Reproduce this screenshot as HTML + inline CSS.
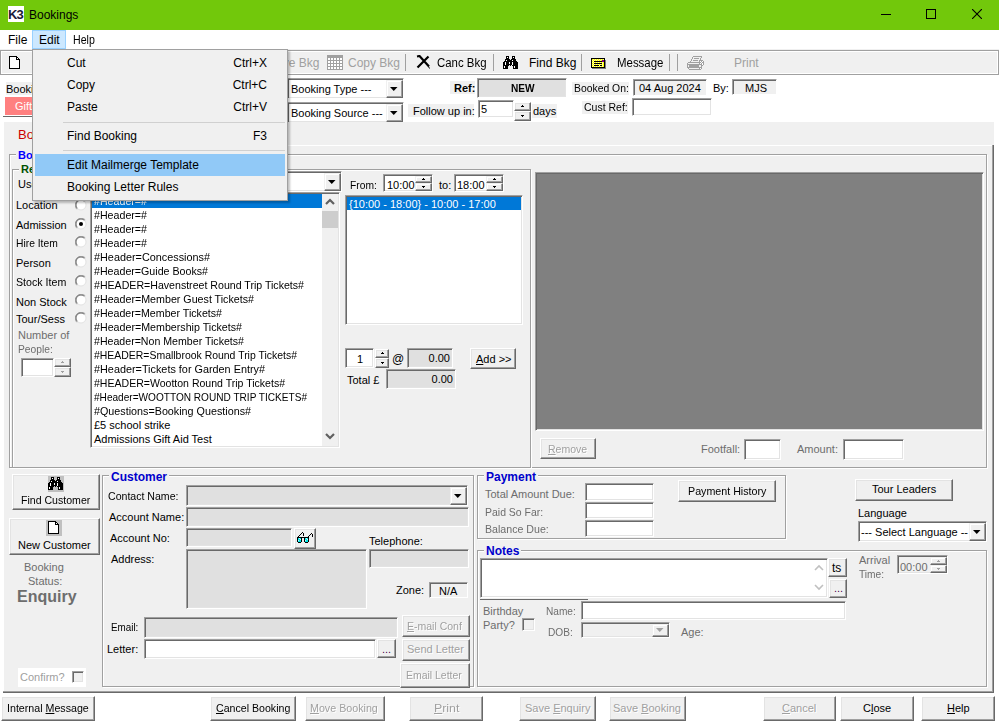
<!DOCTYPE html>
<html><head><meta charset="utf-8">
<style>
*{box-sizing:border-box;margin:0;padding:0}
html,body{width:999px;height:723px;overflow:hidden;background:#fff;position:relative;font-family:"Liberation Sans",sans-serif;font-size:11px;color:#000}
div,span,svg{position:absolute}
.t{white-space:nowrap;line-height:1}
.sk{border:1px solid;border-color:#a0a0a0 #fff #fff #a0a0a0;box-shadow:inset 1px 1px #696969,inset -1px -1px #e3e3e3}
.sk1{border:1px solid;border-color:#a0a0a0 #fff #fff #a0a0a0}
.bt{border:1px solid;border-color:#fff #696969 #696969 #fff;box-shadow:inset -1px -1px #a0a0a0,inset 1px 1px #e3e3e3;background:#f0f0f0}
.cb{border:1px solid;border-color:#f0f0f0 #696969 #696969 #f0f0f0;box-shadow:inset -1px -1px #a0a0a0,inset 1px 1px #fff;background:#f0f0f0}
.grp{border:1px solid #a0a0a0;box-shadow:inset 1px 1px #fff,1px 1px #fff}
.dis{color:#a0a0a0;text-shadow:1px 1px #fff}
.u{text-decoration:underline}
</style></head><body>

<div style="left:0px;top:0px;width:999px;height:30px;background:#72c80b;"></div>
<div style="left:8px;top:6px;width:16px;height:16px;background:#fff;"></div>
<div class="t " style="left:8px;top:8px;font-size:13px;color:#1a1a3a;font-weight:700;letter-spacing:-1px">K3</div>
<div class="t " style="left:29px;top:9px;font-size:12px;color:#000;">Bookings</div>
<div style="left:881px;top:14px;width:10px;height:1px;background:#000;"></div>
<div style="left:926px;top:9px;width:10px;height:10px;border:1px solid #000"></div>
<svg style="left:972px;top:9px" width="10" height="10"><path d="M0 0L10 10M10 0L0 10" stroke="#000" stroke-width="1.1"/></svg>
<div style="left:32px;top:30px;width:34px;height:19px;background:#cce8ff;border:1px solid #99d1ff"></div>
<div class="t " style="left:8px;top:34px;font-size:12px;">File</div>
<div class="t " style="left:39px;top:34px;font-size:12px;">Edit</div>
<div class="t " style="left:73px;top:34px;font-size:12px;transform:scaleX(0.8830);transform-origin:0 0;">Help</div>
<div style="left:0px;top:49px;width:999px;height:1px;background:#f0f0f0;"></div>
<div style="left:0px;top:50px;width:999px;height:25px;background:#f0f0f0;border:1px solid #a0a0a0;box-shadow:inset 1px 1px #fff,inset -1px -1px #fff"></div>
<svg style="left:9px;top:56px" width="11" height="13" shape-rendering="crispEdges"><rect x="0" y="0" width="8" height="1" fill="#000"/><rect x="0" y="1" width="1" height="1" fill="#000"/><rect x="1" y="1" width="6" height="1" fill="#fff"/><rect x="7" y="1" width="2" height="1" fill="#000"/><rect x="0" y="2" width="1" height="1" fill="#000"/><rect x="1" y="2" width="6" height="1" fill="#fff"/><rect x="7" y="2" width="1" height="1" fill="#000"/><rect x="8" y="2" width="1" height="1" fill="#fff"/><rect x="9" y="2" width="1" height="1" fill="#000"/><rect x="0" y="3" width="1" height="1" fill="#000"/><rect x="1" y="3" width="6" height="1" fill="#fff"/><rect x="7" y="3" width="4" height="1" fill="#000"/><rect x="0" y="4" width="1" height="1" fill="#000"/><rect x="1" y="4" width="9" height="1" fill="#fff"/><rect x="10" y="4" width="1" height="1" fill="#000"/><rect x="0" y="5" width="1" height="1" fill="#000"/><rect x="1" y="5" width="9" height="1" fill="#fff"/><rect x="10" y="5" width="1" height="1" fill="#000"/><rect x="0" y="6" width="1" height="1" fill="#000"/><rect x="1" y="6" width="9" height="1" fill="#fff"/><rect x="10" y="6" width="1" height="1" fill="#000"/><rect x="0" y="7" width="1" height="1" fill="#000"/><rect x="1" y="7" width="9" height="1" fill="#fff"/><rect x="10" y="7" width="1" height="1" fill="#000"/><rect x="0" y="8" width="1" height="1" fill="#000"/><rect x="1" y="8" width="9" height="1" fill="#fff"/><rect x="10" y="8" width="1" height="1" fill="#000"/><rect x="0" y="9" width="1" height="1" fill="#000"/><rect x="1" y="9" width="9" height="1" fill="#fff"/><rect x="10" y="9" width="1" height="1" fill="#000"/><rect x="0" y="10" width="1" height="1" fill="#000"/><rect x="1" y="10" width="9" height="1" fill="#fff"/><rect x="10" y="10" width="1" height="1" fill="#000"/><rect x="0" y="11" width="1" height="1" fill="#000"/><rect x="1" y="11" width="9" height="1" fill="#fff"/><rect x="10" y="11" width="1" height="1" fill="#000"/><rect x="0" y="12" width="11" height="1" fill="#000"/></svg>
<div class="t " style="left:268px;top:57px;font-size:12px;color:#a0a0a0;">Save Bkg</div>
<svg style="left:327px;top:55px" width="16" height="15" shape-rendering="crispEdges"><rect x="0" y="0" width="16" height="1" fill="#a0a0a0"/><rect x="0" y="1" width="16" height="1" fill="#a0a0a0"/><rect x="0" y="2" width="16" height="1" fill="#a0a0a0"/><rect x="0" y="3" width="1" height="1" fill="#a0a0a0"/><rect x="1" y="3" width="2" height="1" fill="#fff"/><rect x="3" y="3" width="1" height="1" fill="#a0a0a0"/><rect x="4" y="3" width="2" height="1" fill="#fff"/><rect x="6" y="3" width="1" height="1" fill="#a0a0a0"/><rect x="7" y="3" width="2" height="1" fill="#fff"/><rect x="9" y="3" width="1" height="1" fill="#a0a0a0"/><rect x="10" y="3" width="2" height="1" fill="#fff"/><rect x="12" y="3" width="1" height="1" fill="#a0a0a0"/><rect x="13" y="3" width="2" height="1" fill="#fff"/><rect x="15" y="3" width="1" height="1" fill="#a0a0a0"/><rect x="0" y="4" width="1" height="1" fill="#a0a0a0"/><rect x="1" y="4" width="2" height="1" fill="#fff"/><rect x="3" y="4" width="1" height="1" fill="#a0a0a0"/><rect x="4" y="4" width="2" height="1" fill="#fff"/><rect x="6" y="4" width="1" height="1" fill="#a0a0a0"/><rect x="7" y="4" width="2" height="1" fill="#fff"/><rect x="9" y="4" width="1" height="1" fill="#a0a0a0"/><rect x="10" y="4" width="2" height="1" fill="#fff"/><rect x="12" y="4" width="1" height="1" fill="#a0a0a0"/><rect x="13" y="4" width="2" height="1" fill="#fff"/><rect x="15" y="4" width="1" height="1" fill="#a0a0a0"/><rect x="0" y="5" width="16" height="1" fill="#a0a0a0"/><rect x="0" y="6" width="1" height="1" fill="#a0a0a0"/><rect x="1" y="6" width="2" height="1" fill="#fff"/><rect x="3" y="6" width="1" height="1" fill="#a0a0a0"/><rect x="4" y="6" width="2" height="1" fill="#fff"/><rect x="6" y="6" width="1" height="1" fill="#a0a0a0"/><rect x="7" y="6" width="2" height="1" fill="#fff"/><rect x="9" y="6" width="1" height="1" fill="#a0a0a0"/><rect x="10" y="6" width="2" height="1" fill="#fff"/><rect x="12" y="6" width="1" height="1" fill="#a0a0a0"/><rect x="13" y="6" width="2" height="1" fill="#fff"/><rect x="15" y="6" width="1" height="1" fill="#a0a0a0"/><rect x="0" y="7" width="1" height="1" fill="#a0a0a0"/><rect x="1" y="7" width="2" height="1" fill="#fff"/><rect x="3" y="7" width="1" height="1" fill="#a0a0a0"/><rect x="4" y="7" width="2" height="1" fill="#fff"/><rect x="6" y="7" width="1" height="1" fill="#a0a0a0"/><rect x="7" y="7" width="2" height="1" fill="#fff"/><rect x="9" y="7" width="1" height="1" fill="#a0a0a0"/><rect x="10" y="7" width="2" height="1" fill="#fff"/><rect x="12" y="7" width="1" height="1" fill="#a0a0a0"/><rect x="13" y="7" width="2" height="1" fill="#fff"/><rect x="15" y="7" width="1" height="1" fill="#a0a0a0"/><rect x="0" y="8" width="16" height="1" fill="#a0a0a0"/><rect x="0" y="9" width="1" height="1" fill="#a0a0a0"/><rect x="1" y="9" width="2" height="1" fill="#fff"/><rect x="3" y="9" width="1" height="1" fill="#a0a0a0"/><rect x="4" y="9" width="2" height="1" fill="#fff"/><rect x="6" y="9" width="1" height="1" fill="#a0a0a0"/><rect x="7" y="9" width="2" height="1" fill="#fff"/><rect x="9" y="9" width="1" height="1" fill="#a0a0a0"/><rect x="10" y="9" width="2" height="1" fill="#fff"/><rect x="12" y="9" width="1" height="1" fill="#a0a0a0"/><rect x="13" y="9" width="2" height="1" fill="#fff"/><rect x="15" y="9" width="1" height="1" fill="#a0a0a0"/><rect x="0" y="10" width="1" height="1" fill="#a0a0a0"/><rect x="1" y="10" width="2" height="1" fill="#fff"/><rect x="3" y="10" width="1" height="1" fill="#a0a0a0"/><rect x="4" y="10" width="2" height="1" fill="#fff"/><rect x="6" y="10" width="1" height="1" fill="#a0a0a0"/><rect x="7" y="10" width="2" height="1" fill="#fff"/><rect x="9" y="10" width="1" height="1" fill="#a0a0a0"/><rect x="10" y="10" width="2" height="1" fill="#fff"/><rect x="12" y="10" width="1" height="1" fill="#a0a0a0"/><rect x="13" y="10" width="2" height="1" fill="#fff"/><rect x="15" y="10" width="1" height="1" fill="#a0a0a0"/><rect x="0" y="11" width="16" height="1" fill="#a0a0a0"/><rect x="0" y="12" width="1" height="1" fill="#a0a0a0"/><rect x="1" y="12" width="2" height="1" fill="#fff"/><rect x="3" y="12" width="1" height="1" fill="#a0a0a0"/><rect x="4" y="12" width="2" height="1" fill="#fff"/><rect x="6" y="12" width="1" height="1" fill="#a0a0a0"/><rect x="7" y="12" width="2" height="1" fill="#fff"/><rect x="9" y="12" width="1" height="1" fill="#a0a0a0"/><rect x="10" y="12" width="2" height="1" fill="#fff"/><rect x="12" y="12" width="1" height="1" fill="#a0a0a0"/><rect x="13" y="12" width="2" height="1" fill="#fff"/><rect x="15" y="12" width="1" height="1" fill="#a0a0a0"/><rect x="0" y="13" width="1" height="1" fill="#a0a0a0"/><rect x="1" y="13" width="2" height="1" fill="#fff"/><rect x="3" y="13" width="1" height="1" fill="#a0a0a0"/><rect x="4" y="13" width="2" height="1" fill="#fff"/><rect x="6" y="13" width="1" height="1" fill="#a0a0a0"/><rect x="7" y="13" width="2" height="1" fill="#fff"/><rect x="9" y="13" width="1" height="1" fill="#a0a0a0"/><rect x="10" y="13" width="2" height="1" fill="#fff"/><rect x="12" y="13" width="1" height="1" fill="#a0a0a0"/><rect x="13" y="13" width="2" height="1" fill="#fff"/><rect x="15" y="13" width="1" height="1" fill="#a0a0a0"/><rect x="0" y="14" width="16" height="1" fill="#a0a0a0"/></svg>
<div class="t " style="left:348px;top:57px;font-size:12px;color:#a0a0a0;">Copy Bkg</div>
<div style="left:405px;top:54px;width:1px;height:17px;background:#a0a0a0;"></div>
<svg style="left:416px;top:55px" width="15" height="15"><path d="M1 1.5L3.5 1L13 11.5M12.5 1.5L1.5 12.5" stroke="#000" stroke-width="2.2" fill="none"/><path d="M12.5 11.5L13.5 13.5" stroke="#000" stroke-width="1"/></svg>
<div class="t " style="left:437px;top:57px;font-size:12px;transform:scaleX(0.9514);transform-origin:0 0;">Canc Bkg</div>
<div style="left:493px;top:54px;width:1px;height:17px;background:#a0a0a0;"></div>
<svg style="left:503px;top:56px" width="15" height="13" shape-rendering="crispEdges"><rect x="3" y="0" width="3" height="1" fill="#000"/><rect x="9" y="0" width="3" height="1" fill="#000"/><rect x="3" y="1" width="1" height="1" fill="#000"/><rect x="4" y="1" width="1" height="1" fill="#fff"/><rect x="5" y="1" width="1" height="1" fill="#000"/><rect x="9" y="1" width="1" height="1" fill="#000"/><rect x="10" y="1" width="1" height="1" fill="#fff"/><rect x="11" y="1" width="1" height="1" fill="#000"/><rect x="3" y="2" width="3" height="1" fill="#000"/><rect x="9" y="2" width="3" height="1" fill="#000"/><rect x="2" y="3" width="5" height="1" fill="#000"/><rect x="8" y="3" width="5" height="1" fill="#000"/><rect x="2" y="4" width="1" height="1" fill="#000"/><rect x="3" y="4" width="1" height="1" fill="#fff"/><rect x="4" y="4" width="5" height="1" fill="#000"/><rect x="9" y="4" width="1" height="1" fill="#fff"/><rect x="10" y="4" width="3" height="1" fill="#000"/><rect x="1" y="5" width="13" height="1" fill="#000"/><rect x="0" y="6" width="2" height="1" fill="#000"/><rect x="2" y="6" width="1" height="1" fill="#fff"/><rect x="3" y="6" width="3" height="1" fill="#000"/><rect x="6" y="6" width="1" height="1" fill="#fff"/><rect x="7" y="6" width="2" height="1" fill="#000"/><rect x="9" y="6" width="1" height="1" fill="#fff"/><rect x="10" y="6" width="5" height="1" fill="#000"/><rect x="0" y="7" width="2" height="1" fill="#000"/><rect x="2" y="7" width="1" height="1" fill="#fff"/><rect x="3" y="7" width="3" height="1" fill="#000"/><rect x="6" y="7" width="1" height="1" fill="#fff"/><rect x="7" y="7" width="2" height="1" fill="#000"/><rect x="9" y="7" width="1" height="1" fill="#fff"/><rect x="10" y="7" width="5" height="1" fill="#000"/><rect x="0" y="8" width="2" height="1" fill="#000"/><rect x="2" y="8" width="1" height="1" fill="#fff"/><rect x="3" y="8" width="6" height="1" fill="#000"/><rect x="9" y="8" width="1" height="1" fill="#fff"/><rect x="10" y="8" width="5" height="1" fill="#000"/><rect x="0" y="9" width="6" height="1" fill="#000"/><rect x="7" y="9" width="1" height="1" fill="#000"/><rect x="9" y="9" width="6" height="1" fill="#000"/><rect x="0" y="10" width="1" height="1" fill="#000"/><rect x="1" y="10" width="1" height="1" fill="#fff"/><rect x="2" y="10" width="3" height="1" fill="#000"/><rect x="10" y="10" width="1" height="1" fill="#000"/><rect x="11" y="10" width="1" height="1" fill="#fff"/><rect x="12" y="10" width="3" height="1" fill="#000"/><rect x="0" y="11" width="1" height="1" fill="#000"/><rect x="1" y="11" width="1" height="1" fill="#fff"/><rect x="2" y="11" width="3" height="1" fill="#000"/><rect x="10" y="11" width="1" height="1" fill="#000"/><rect x="11" y="11" width="1" height="1" fill="#fff"/><rect x="12" y="11" width="3" height="1" fill="#000"/><rect x="0" y="12" width="5" height="1" fill="#000"/><rect x="10" y="12" width="5" height="1" fill="#000"/></svg>
<div class="t " style="left:529px;top:57px;font-size:12px;">Find Bkg</div>
<div style="left:581px;top:54px;width:1px;height:17px;background:#a0a0a0;"></div>
<svg style="left:591px;top:58px" width="15" height="11" shape-rendering="crispEdges"><rect x="0" y="0" width="14" height="1" fill="#000"/><rect x="0" y="1" width="1" height="1" fill="#000"/><rect x="1" y="1" width="1" height="1" fill="#ffff00"/><rect x="2" y="1" width="1" height="1" fill="#ffffa0"/><rect x="3" y="1" width="1" height="1" fill="#ffff00"/><rect x="4" y="1" width="1" height="1" fill="#ffffa0"/><rect x="5" y="1" width="1" height="1" fill="#ffff00"/><rect x="6" y="1" width="1" height="1" fill="#ffffa0"/><rect x="7" y="1" width="1" height="1" fill="#ffff00"/><rect x="8" y="1" width="1" height="1" fill="#ffffa0"/><rect x="9" y="1" width="1" height="1" fill="#ffff00"/><rect x="10" y="1" width="1" height="1" fill="#ffffa0"/><rect x="11" y="1" width="1" height="1" fill="#ffff00"/><rect x="12" y="1" width="1" height="1" fill="#ffffa0"/><rect x="13" y="1" width="1" height="1" fill="#000"/><rect x="0" y="2" width="1" height="1" fill="#000"/><rect x="1" y="2" width="1" height="1" fill="#ffffa0"/><rect x="2" y="2" width="1" height="1" fill="#ffff00"/><rect x="3" y="2" width="1" height="1" fill="#ffffa0"/><rect x="4" y="2" width="1" height="1" fill="#ffff00"/><rect x="5" y="2" width="1" height="1" fill="#ffffa0"/><rect x="6" y="2" width="1" height="1" fill="#ffff00"/><rect x="7" y="2" width="1" height="1" fill="#ffffa0"/><rect x="8" y="2" width="1" height="1" fill="#ffff00"/><rect x="9" y="2" width="1" height="1" fill="#ffffa0"/><rect x="10" y="2" width="1" height="1" fill="#ffff00"/><rect x="11" y="2" width="2" height="1" fill="#800080"/><rect x="13" y="2" width="1" height="1" fill="#000"/><rect x="14" y="2" width="1" height="1" fill="#808080"/><rect x="0" y="3" width="1" height="1" fill="#000"/><rect x="1" y="3" width="1" height="1" fill="#ffff00"/><rect x="2" y="3" width="1" height="1" fill="#ffffa0"/><rect x="3" y="3" width="8" height="1" fill="#000"/><rect x="11" y="3" width="2" height="1" fill="#800080"/><rect x="13" y="3" width="1" height="1" fill="#000"/><rect x="14" y="3" width="1" height="1" fill="#808080"/><rect x="0" y="4" width="1" height="1" fill="#000"/><rect x="1" y="4" width="1" height="1" fill="#ffffa0"/><rect x="2" y="4" width="1" height="1" fill="#ffff00"/><rect x="3" y="4" width="1" height="1" fill="#ffffa0"/><rect x="4" y="4" width="1" height="1" fill="#ffff00"/><rect x="5" y="4" width="1" height="1" fill="#ffffa0"/><rect x="6" y="4" width="1" height="1" fill="#ffff00"/><rect x="7" y="4" width="1" height="1" fill="#ffffa0"/><rect x="8" y="4" width="1" height="1" fill="#ffff00"/><rect x="9" y="4" width="1" height="1" fill="#ffffa0"/><rect x="10" y="4" width="1" height="1" fill="#ffff00"/><rect x="11" y="4" width="1" height="1" fill="#ffffa0"/><rect x="12" y="4" width="1" height="1" fill="#ffff00"/><rect x="13" y="4" width="1" height="1" fill="#000"/><rect x="14" y="4" width="1" height="1" fill="#808080"/><rect x="0" y="5" width="1" height="1" fill="#000"/><rect x="1" y="5" width="1" height="1" fill="#ffff00"/><rect x="2" y="5" width="1" height="1" fill="#ffffa0"/><rect x="3" y="5" width="8" height="1" fill="#000"/><rect x="11" y="5" width="1" height="1" fill="#ffffa0"/><rect x="12" y="5" width="1" height="1" fill="#ffff00"/><rect x="13" y="5" width="1" height="1" fill="#000"/><rect x="14" y="5" width="1" height="1" fill="#808080"/><rect x="0" y="6" width="1" height="1" fill="#000"/><rect x="1" y="6" width="1" height="1" fill="#ffffa0"/><rect x="2" y="6" width="1" height="1" fill="#ffff00"/><rect x="3" y="6" width="1" height="1" fill="#ffffa0"/><rect x="4" y="6" width="1" height="1" fill="#ffff00"/><rect x="5" y="6" width="1" height="1" fill="#ffffa0"/><rect x="6" y="6" width="1" height="1" fill="#ffff00"/><rect x="7" y="6" width="1" height="1" fill="#ffffa0"/><rect x="8" y="6" width="1" height="1" fill="#ffff00"/><rect x="9" y="6" width="1" height="1" fill="#ffffa0"/><rect x="10" y="6" width="1" height="1" fill="#ffff00"/><rect x="11" y="6" width="1" height="1" fill="#ffffa0"/><rect x="12" y="6" width="1" height="1" fill="#ffff00"/><rect x="13" y="6" width="1" height="1" fill="#000"/><rect x="14" y="6" width="1" height="1" fill="#808080"/><rect x="0" y="7" width="1" height="1" fill="#000"/><rect x="1" y="7" width="1" height="1" fill="#ffff00"/><rect x="2" y="7" width="1" height="1" fill="#ffffa0"/><rect x="3" y="7" width="5" height="1" fill="#000"/><rect x="8" y="7" width="1" height="1" fill="#ffffa0"/><rect x="9" y="7" width="2" height="1" fill="#000"/><rect x="11" y="7" width="1" height="1" fill="#ffffa0"/><rect x="12" y="7" width="1" height="1" fill="#ffff00"/><rect x="13" y="7" width="1" height="1" fill="#000"/><rect x="14" y="7" width="1" height="1" fill="#808080"/><rect x="0" y="8" width="1" height="1" fill="#000"/><rect x="1" y="8" width="1" height="1" fill="#ffffa0"/><rect x="2" y="8" width="1" height="1" fill="#ffff00"/><rect x="3" y="8" width="1" height="1" fill="#ffffa0"/><rect x="4" y="8" width="1" height="1" fill="#ffff00"/><rect x="5" y="8" width="1" height="1" fill="#ffffa0"/><rect x="6" y="8" width="1" height="1" fill="#ffff00"/><rect x="7" y="8" width="1" height="1" fill="#ffffa0"/><rect x="8" y="8" width="1" height="1" fill="#ffff00"/><rect x="9" y="8" width="1" height="1" fill="#ffffa0"/><rect x="10" y="8" width="1" height="1" fill="#ffff00"/><rect x="11" y="8" width="1" height="1" fill="#ffffa0"/><rect x="12" y="8" width="1" height="1" fill="#ffff00"/><rect x="13" y="8" width="1" height="1" fill="#000"/><rect x="14" y="8" width="1" height="1" fill="#808080"/><rect x="0" y="9" width="14" height="1" fill="#000"/><rect x="14" y="9" width="1" height="1" fill="#808080"/><rect x="1" y="10" width="14" height="1" fill="#808080"/></svg>
<div class="t " style="left:617px;top:57px;font-size:12px;transform:scaleX(0.9527);transform-origin:0 0;">Message</div>
<div style="left:669px;top:54px;width:1px;height:17px;background:#a0a0a0;"></div>
<div style="left:677px;top:54px;width:1px;height:17px;background:#a0a0a0;"></div>
<svg style="left:687px;top:56px" width="17" height="14" shape-rendering="crispEdges"><rect x="6" y="0" width="9" height="1" fill="#a0a0a0"/><rect x="5" y="1" width="1" height="1" fill="#a0a0a0"/><rect x="14" y="1" width="1" height="1" fill="#a0a0a0"/><rect x="5" y="2" width="1" height="1" fill="#a0a0a0"/><rect x="7" y="2" width="5" height="1" fill="#a0a0a0"/><rect x="13" y="2" width="1" height="1" fill="#a0a0a0"/><rect x="4" y="3" width="1" height="1" fill="#a0a0a0"/><rect x="13" y="3" width="1" height="1" fill="#a0a0a0"/><rect x="4" y="4" width="1" height="1" fill="#a0a0a0"/><rect x="6" y="4" width="5" height="1" fill="#a0a0a0"/><rect x="12" y="4" width="4" height="1" fill="#a0a0a0"/><rect x="3" y="5" width="1" height="1" fill="#a0a0a0"/><rect x="12" y="5" width="1" height="1" fill="#a0a0a0"/><rect x="13" y="5" width="1" height="1" fill="#fff"/><rect x="14" y="5" width="1" height="1" fill="#a0a0a0"/><rect x="15" y="5" width="1" height="1" fill="#fff"/><rect x="16" y="5" width="1" height="1" fill="#a0a0a0"/><rect x="1" y="6" width="13" height="1" fill="#a0a0a0"/><rect x="14" y="6" width="1" height="1" fill="#fff"/><rect x="15" y="6" width="2" height="1" fill="#a0a0a0"/><rect x="0" y="7" width="1" height="1" fill="#a0a0a0"/><rect x="12" y="7" width="1" height="1" fill="#a0a0a0"/><rect x="13" y="7" width="1" height="1" fill="#fff"/><rect x="14" y="7" width="1" height="1" fill="#a0a0a0"/><rect x="15" y="7" width="1" height="1" fill="#fff"/><rect x="16" y="7" width="1" height="1" fill="#a0a0a0"/><rect x="0" y="8" width="15" height="1" fill="#a0a0a0"/><rect x="15" y="8" width="1" height="1" fill="#fff"/><rect x="16" y="8" width="1" height="1" fill="#a0a0a0"/><rect x="0" y="9" width="1" height="1" fill="#a0a0a0"/><rect x="2" y="9" width="10" height="1" fill="#a0a0a0"/><rect x="14" y="9" width="2" height="1" fill="#a0a0a0"/><rect x="0" y="10" width="1" height="1" fill="#a0a0a0"/><rect x="2" y="10" width="10" height="1" fill="#a0a0a0"/><rect x="14" y="10" width="1" height="1" fill="#a0a0a0"/><rect x="0" y="11" width="15" height="1" fill="#a0a0a0"/><rect x="1" y="12" width="1" height="1" fill="#a0a0a0"/><rect x="12" y="12" width="1" height="1" fill="#a0a0a0"/><rect x="13" y="12" width="1" height="1" fill="#fff"/><rect x="14" y="12" width="1" height="1" fill="#a0a0a0"/><rect x="2" y="13" width="12" height="1" fill="#a0a0a0"/></svg>
<div class="t " style="left:734px;top:57px;font-size:12px;color:#a0a0a0;">Print</div>
<div style="left:6px;top:82px;width:94px;height:13px;background:#f0f0f0;"></div>
<div class="t " style="left:6px;top:84px;font-size:11px;">Booking</div>
<div style="left:4px;top:96px;width:96px;height:19px;background:#fff;"></div>
<div style="left:5px;top:97px;width:95px;height:18px;background:#ff8080;"></div>
<div class="t " style="left:15px;top:101px;font-size:11px;color:#fff;">Gift Aid</div>
<div style="left:3px;top:116px;width:117px;height:1px;background:#696969;"></div>
<div class="sk" style="left:287px;top:78px;width:117px;height:21px;background:#fff;"></div>
<div class="cb" style="left:386px;top:80px;width:17px;height:18px"></div>
<svg style="left:390px;top:87px" width="8" height="5"><path d="M0 0H7.5L3.75 4Z" fill="#000"/></svg>
<div class="t " style="left:291px;top:84px;font-size:11px;">Booking Type ---</div>
<div class="sk" style="left:287px;top:102px;width:117px;height:21px;background:#fff;"></div>
<div class="cb" style="left:386px;top:104px;width:17px;height:18px"></div>
<svg style="left:390px;top:111px" width="8" height="5"><path d="M0 0H7.5L3.75 4Z" fill="#000"/></svg>
<div class="t " style="left:291px;top:108px;font-size:11px;">Booking Source ---</div>
<div style="left:450px;top:81px;width:25px;height:13px;background:#f0f0f0;"></div>
<div class="t " style="left:454px;top:83px;font-size:11px;font-weight:700;">Ref:</div>
<div class="sk" style="left:477px;top:78px;width:90px;height:20px;background:#e0e0e0;"></div>
<div class="t " style="left:511px;top:83px;font-size:11px;font-weight:700;transform:scaleX(0.9193);transform-origin:0 0;">NEW</div>
<div style="left:408px;top:104px;width:66px;height:13px;background:#f0f0f0;"></div>
<div class="t " style="left:413px;top:106px;font-size:11px;">Follow up in:</div>
<div class="sk" style="left:478px;top:100px;width:36px;height:18px;background:#fff;"></div>
<div class="t " style="left:481px;top:104px;font-size:11px;">5</div>
<div class="bt" style="left:514px;top:102px;width:17px;height:9px;"></div>
<div class="bt" style="left:514px;top:111px;width:17px;height:10px;"></div>
<svg style="left:521px;top:105px" width="3" height="2" shape-rendering="crispEdges"><rect x="1" y="0" width="1" height="1" fill="#000"/><rect x="0" y="1" width="3" height="1" fill="#000"/></svg>
<svg style="left:521px;top:115px" width="3" height="2" shape-rendering="crispEdges"><rect x="0" y="0" width="3" height="1" fill="#000"/><rect x="1" y="1" width="1" height="1" fill="#000"/></svg>
<div style="left:532px;top:104px;width:25px;height:14px;background:#f0f0f0;"></div>
<div class="t " style="left:533px;top:106px;font-size:11px;">days</div>
<div style="left:572px;top:82px;width:57px;height:13px;background:#f0f0f0;"></div>
<div class="t " style="left:574px;top:83px;font-size:11px;transform:scaleX(0.9433);transform-origin:0 0;">Booked On:</div>
<div class="sk1" style="left:633px;top:79px;width:74px;height:17px;background:#f0f0f0;box-shadow:inset 1px 1px #696969"></div>
<div class="t " style="left:639px;top:83px;font-size:11px;">04 Aug 2024</div>
<div class="t " style="left:713px;top:83px;font-size:11px;">By:</div>
<div class="sk1" style="left:732px;top:79px;width:45px;height:16px;background:#f0f0f0;box-shadow:inset 1px 1px #696969"></div>
<div class="t " style="left:745px;top:83px;font-size:11px;">MJS</div>
<div style="left:582px;top:101px;width:46px;height:13px;background:#f0f0f0;"></div>
<div class="t " style="left:584px;top:102px;font-size:11px;transform:scaleX(0.9551);transform-origin:0 0;">Cust Ref:</div>
<div class="sk" style="left:632px;top:98px;width:80px;height:18px;background:#fff;"></div>
<div style="left:4px;top:122px;width:990px;height:570px;background:#f0f0f0;"></div>
<div style="left:3px;top:692px;width:991px;height:1px;background:#696969;"></div>
<div style="left:3px;top:691px;width:991px;height:1px;background:#a0a0a0;"></div>
<div style="left:32px;top:145px;width:960px;height:1px;background:#fff;"></div>
<div style="left:3px;top:122px;width:1px;height:1px;background:#fff;"></div>
<div style="left:992px;top:145px;width:1px;height:547px;background:#a0a0a0;"></div>
<div style="left:993px;top:145px;width:1px;height:547px;background:#696969;"></div>
<div class="t " style="left:18px;top:128px;font-size:13px;color:#cc0000;">Booking</div>
<div class="grp" style="left:9px;top:154px;width:978px;height:314px;"></div>
<div class="t " style="left:16px;top:150px;font-size:11px;color:#0000ff;font-weight:700;background:#f0f0f0;padding:0 2px">Booking</div>
<div class="grp" style="left:12px;top:169px;width:519px;height:299px;"></div>
<div class="t " style="left:19px;top:164px;font-size:11px;color:#005000;font-weight:700;background:#f0f0f0;padding:0 2px">Resource</div>
<div class="t " style="left:18px;top:179px;font-size:11px;">Use</div>
<div class="t " style="left:16px;top:200px;font-size:11px;">Location</div>
<svg style="left:75px;top:199px" width="12" height="12"><circle cx="6" cy="6" r="5" fill="#fff"/><path d="M1.76 10.24A6 6 0 0 1 10.24 1.76" fill="none" stroke="#a0a0a0"/><path d="M2.46 9.54A5 5 0 0 1 9.54 2.46" fill="none" stroke="#696969"/><path d="M9.54 2.46A5 5 0 0 1 2.46 9.54" fill="none" stroke="#e3e3e3"/></svg>
<div class="t " style="left:16px;top:220px;font-size:11px;">Admission</div>
<svg style="left:75px;top:218px" width="12" height="12"><circle cx="6" cy="6" r="5" fill="#fff"/><path d="M1.76 10.24A6 6 0 0 1 10.24 1.76" fill="none" stroke="#a0a0a0"/><path d="M2.46 9.54A5 5 0 0 1 9.54 2.46" fill="none" stroke="#696969"/><path d="M9.54 2.46A5 5 0 0 1 2.46 9.54" fill="none" stroke="#e3e3e3"/><circle cx="6" cy="6" r="2" fill="#000"/></svg>
<div class="t " style="left:16px;top:238px;font-size:11px;transform:scaleX(0.9367);transform-origin:0 0;">Hire Item</div>
<svg style="left:75px;top:236px" width="12" height="12"><circle cx="6" cy="6" r="5" fill="#fff"/><path d="M1.76 10.24A6 6 0 0 1 10.24 1.76" fill="none" stroke="#a0a0a0"/><path d="M2.46 9.54A5 5 0 0 1 9.54 2.46" fill="none" stroke="#696969"/><path d="M9.54 2.46A5 5 0 0 1 2.46 9.54" fill="none" stroke="#e3e3e3"/></svg>
<div class="t " style="left:16px;top:258px;font-size:11px;">Person</div>
<svg style="left:75px;top:256px" width="12" height="12"><circle cx="6" cy="6" r="5" fill="#fff"/><path d="M1.76 10.24A6 6 0 0 1 10.24 1.76" fill="none" stroke="#a0a0a0"/><path d="M2.46 9.54A5 5 0 0 1 9.54 2.46" fill="none" stroke="#696969"/><path d="M9.54 2.46A5 5 0 0 1 2.46 9.54" fill="none" stroke="#e3e3e3"/></svg>
<div class="t " style="left:16px;top:277px;font-size:11px;transform:scaleX(0.9679);transform-origin:0 0;">Stock Item</div>
<svg style="left:75px;top:275px" width="12" height="12"><circle cx="6" cy="6" r="5" fill="#fff"/><path d="M1.76 10.24A6 6 0 0 1 10.24 1.76" fill="none" stroke="#a0a0a0"/><path d="M2.46 9.54A5 5 0 0 1 9.54 2.46" fill="none" stroke="#696969"/><path d="M9.54 2.46A5 5 0 0 1 2.46 9.54" fill="none" stroke="#e3e3e3"/></svg>
<div class="t " style="left:16px;top:297px;font-size:11px;">Non Stock</div>
<svg style="left:75px;top:294px" width="12" height="12"><circle cx="6" cy="6" r="5" fill="#fff"/><path d="M1.76 10.24A6 6 0 0 1 10.24 1.76" fill="none" stroke="#a0a0a0"/><path d="M2.46 9.54A5 5 0 0 1 9.54 2.46" fill="none" stroke="#696969"/><path d="M9.54 2.46A5 5 0 0 1 2.46 9.54" fill="none" stroke="#e3e3e3"/></svg>
<div class="t " style="left:16px;top:314px;font-size:11px;">Tour/Sess</div>
<svg style="left:75px;top:312px" width="12" height="12"><circle cx="6" cy="6" r="5" fill="#fff"/><path d="M1.76 10.24A6 6 0 0 1 10.24 1.76" fill="none" stroke="#a0a0a0"/><path d="M2.46 9.54A5 5 0 0 1 9.54 2.46" fill="none" stroke="#696969"/><path d="M9.54 2.46A5 5 0 0 1 2.46 9.54" fill="none" stroke="#e3e3e3"/></svg>
<div class="t " style="left:18px;top:330px;font-size:11px;color:#6d6d6d;">Number of</div>
<div class="t " style="left:18px;top:344px;font-size:11px;color:#6d6d6d;transform:scaleX(0.9327);transform-origin:0 0;">People:</div>
<div class="sk" style="left:21px;top:358px;width:33px;height:19px;background:#fff;"></div>
<div class="bt" style="left:54px;top:358px;width:17px;height:9px;"></div>
<div class="bt" style="left:54px;top:367px;width:17px;height:10px;"></div>
<svg style="left:61px;top:361px" width="3" height="2" shape-rendering="crispEdges"><rect x="1" y="0" width="1" height="1" fill="#a0a0a0"/><rect x="0" y="1" width="3" height="1" fill="#a0a0a0"/></svg>
<svg style="left:61px;top:371px" width="3" height="2" shape-rendering="crispEdges"><rect x="0" y="0" width="3" height="1" fill="#a0a0a0"/><rect x="1" y="1" width="1" height="1" fill="#a0a0a0"/></svg>
<div class="sk" style="left:90px;top:192px;width:250px;height:256px;background:#fff;"></div>
<div style="left:92px;top:194px;width:230px;height:14px;background:#0078d7;"></div>
<div class="t " style="left:94px;top:196px;font-size:11px;color:#fff;transform:scaleX(0.9680);transform-origin:0 0;">#Header=#</div>
<div class="t " style="left:94px;top:210px;font-size:11px;color:#000;transform:scaleX(0.9680);transform-origin:0 0;">#Header=#</div>
<div class="t " style="left:94px;top:224px;font-size:11px;color:#000;transform:scaleX(0.9680);transform-origin:0 0;">#Header=#</div>
<div class="t " style="left:94px;top:238px;font-size:11px;color:#000;transform:scaleX(0.9680);transform-origin:0 0;">#Header=#</div>
<div class="t " style="left:94px;top:252px;font-size:11px;color:#000;transform:scaleX(0.9854);transform-origin:0 0;">#Header=Concessions#</div>
<div class="t " style="left:94px;top:266px;font-size:11px;color:#000;transform:scaleX(0.9684);transform-origin:0 0;">#Header=Guide Books#</div>
<div class="t " style="left:94px;top:280px;font-size:11px;color:#000;transform:scaleX(0.9634);transform-origin:0 0;">#HEADER=Havenstreet Round Trip Tickets#</div>
<div class="t " style="left:94px;top:294px;font-size:11px;color:#000;transform:scaleX(0.9710);transform-origin:0 0;">#Header=Member Guest Tickets#</div>
<div class="t " style="left:94px;top:308px;font-size:11px;color:#000;transform:scaleX(0.9669);transform-origin:0 0;">#Header=Member Tickets#</div>
<div class="t " style="left:94px;top:322px;font-size:11px;color:#000;transform:scaleX(0.9702);transform-origin:0 0;">#Header=Membership Tickets#</div>
<div class="t " style="left:94px;top:336px;font-size:11px;color:#000;transform:scaleX(0.9640);transform-origin:0 0;">#Header=Non Member Tickets#</div>
<div class="t " style="left:94px;top:350px;font-size:11px;color:#000;transform:scaleX(0.9500);transform-origin:0 0;">#HEADER=Smallbrook Round Trip Tickets#</div>
<div class="t " style="left:94px;top:364px;font-size:11px;color:#000;transform:scaleX(0.9853);transform-origin:0 0;">#Header=Tickets for Garden Entry#</div>
<div class="t " style="left:94px;top:378px;font-size:11px;color:#000;transform:scaleX(0.9578);transform-origin:0 0;">#HEADER=Wootton Round Trip Tickets#</div>
<div class="t " style="left:94px;top:392px;font-size:11px;color:#000;transform:scaleX(0.9166);transform-origin:0 0;">#Header=WOOTTON ROUND TRIP TICKETS#</div>
<div class="t " style="left:94px;top:406px;font-size:11px;color:#000;transform:scaleX(0.9780);transform-origin:0 0;">#Questions=Booking Questions#</div>
<div class="t " style="left:94px;top:420px;font-size:11px;color:#000;">&pound;5 school strike</div>
<div class="t " style="left:94px;top:434px;font-size:11px;color:#000;">Admissions Gift Aid Test</div>
<div style="left:322px;top:194px;width:16px;height:252px;background:#f0f0f0;"></div>
<div style="left:322px;top:211px;width:16px;height:17px;background:#cdcdcd;"></div>
<svg style="left:325px;top:198px" width="10" height="8"><path d="M1 6L5 2L9 6" fill="none" stroke="#606060" stroke-width="2.2"/></svg>
<svg style="left:325px;top:432px" width="10" height="8"><path d="M1 2L5 6L9 2" fill="none" stroke="#606060" stroke-width="2.2"/></svg>
<div class="sk" style="left:90px;top:171px;width:252px;height:21px;background:#fff;"></div>
<div class="cb" style="left:324px;top:173px;width:17px;height:18px"></div>
<svg style="left:328px;top:180px" width="8" height="5"><path d="M0 0H7.5L3.75 4Z" fill="#000"/></svg>
<div class="t " style="left:350px;top:180px;font-size:11px;transform:scaleX(0.9327);transform-origin:0 0;">From:</div>
<div class="sk" style="left:383px;top:174px;width:50px;height:18px;background:#fff;"></div>
<div class="cb" style="left:415px;top:176px;width:17px;height:7px"></div>
<div class="cb" style="left:415px;top:183px;width:17px;height:8px"></div>
<svg style="left:422px;top:178px" width="3" height="2" shape-rendering="crispEdges"><rect x="1" y="0" width="1" height="1" fill="#000"/><rect x="0" y="1" width="3" height="1" fill="#000"/></svg>
<svg style="left:422px;top:186px" width="3" height="2" shape-rendering="crispEdges"><rect x="0" y="0" width="3" height="1" fill="#000"/><rect x="1" y="1" width="1" height="1" fill="#000"/></svg>
<div class="t " style="left:387px;top:180px;font-size:11px;">10:00</div>
<div class="t " style="left:439px;top:180px;font-size:11px;">to:</div>
<div class="sk" style="left:454px;top:174px;width:50px;height:18px;background:#fff;"></div>
<div class="cb" style="left:486px;top:176px;width:17px;height:7px"></div>
<div class="cb" style="left:486px;top:183px;width:17px;height:8px"></div>
<svg style="left:493px;top:178px" width="3" height="2" shape-rendering="crispEdges"><rect x="1" y="0" width="1" height="1" fill="#000"/><rect x="0" y="1" width="3" height="1" fill="#000"/></svg>
<svg style="left:493px;top:186px" width="3" height="2" shape-rendering="crispEdges"><rect x="0" y="0" width="3" height="1" fill="#000"/><rect x="1" y="1" width="1" height="1" fill="#000"/></svg>
<div class="t " style="left:457px;top:180px;font-size:11px;">18:00</div>
<div class="sk" style="left:345px;top:195px;width:178px;height:130px;background:#fff;"></div>
<div style="left:347px;top:197px;width:174px;height:13px;background:#0078d7;"></div>
<div class="t " style="left:349px;top:199px;font-size:11px;color:#fff;">{10:00 - 18:00} - 10:00 - 17:00</div>
<div class="sk" style="left:345px;top:348px;width:29px;height:20px;background:#fff;"></div>
<div class="t " style="left:357px;top:354px;font-size:11px;">1</div>
<div class="bt" style="left:375px;top:349px;width:14px;height:9px;"></div>
<div class="bt" style="left:375px;top:358px;width:14px;height:10px;"></div>
<svg style="left:381px;top:352px" width="3" height="2" shape-rendering="crispEdges"><rect x="1" y="0" width="1" height="1" fill="#000"/><rect x="0" y="1" width="3" height="1" fill="#000"/></svg>
<svg style="left:381px;top:362px" width="3" height="2" shape-rendering="crispEdges"><rect x="0" y="0" width="3" height="1" fill="#000"/><rect x="1" y="1" width="1" height="1" fill="#000"/></svg>
<div class="t " style="left:392px;top:353px;font-size:11px;font-size:12px">@</div>
<div class="sk" style="left:407px;top:348px;width:46px;height:20px;background:#e0e0e0;"></div>
<div class="t" style="left:407px;width:43px;top:353px;text-align:right">0.00</div>
<div class="bt" style="left:470px;top:348px;width:46px;height:21px;"></div>
<div class="t " style="left:476px;top:354px;font-size:11px;"><span class="u" style="position:static">A</span>dd &gt;&gt;</div>
<div class="t " style="left:347px;top:375px;font-size:11px;">Total &pound;</div>
<div class="sk" style="left:386px;top:369px;width:70px;height:20px;background:#e0e0e0;"></div>
<div class="t" style="left:386px;width:67px;top:374px;text-align:right">0.00</div>
<div class="sk" style="left:535px;top:172px;width:449px;height:259px;background:#808080;"></div>
<div class="bt" style="left:540px;top:438px;width:56px;height:21px;"></div>
<div class="t dis" style="left:548px;top:444px;font-size:11px;transform:scaleX(0.9565);transform-origin:0 0;"><span class="u" style="position:static">R</span>emove</div>
<div class="t " style="left:701px;top:444px;font-size:11px;color:#6d6d6d;">Footfall:</div>
<div class="sk" style="left:744px;top:439px;width:37px;height:21px;background:#fff;"></div>
<div class="t " style="left:797px;top:444px;font-size:11px;color:#6d6d6d;">Amount:</div>
<div class="sk" style="left:843px;top:439px;width:61px;height:21px;background:#fff;"></div>
<div class="bt" style="left:12px;top:474px;width:88px;height:36px;"></div>
<div style="left:48px;top:476px;width:16px;height:16px;background:#c0c0c0;"></div>
<svg style="left:48px;top:477px" width="15" height="13" shape-rendering="crispEdges"><rect x="3" y="0" width="3" height="1" fill="#000"/><rect x="9" y="0" width="3" height="1" fill="#000"/><rect x="3" y="1" width="1" height="1" fill="#000"/><rect x="4" y="1" width="1" height="1" fill="#fff"/><rect x="5" y="1" width="1" height="1" fill="#000"/><rect x="9" y="1" width="1" height="1" fill="#000"/><rect x="10" y="1" width="1" height="1" fill="#fff"/><rect x="11" y="1" width="1" height="1" fill="#000"/><rect x="3" y="2" width="3" height="1" fill="#000"/><rect x="9" y="2" width="3" height="1" fill="#000"/><rect x="2" y="3" width="5" height="1" fill="#000"/><rect x="8" y="3" width="5" height="1" fill="#000"/><rect x="2" y="4" width="1" height="1" fill="#000"/><rect x="3" y="4" width="1" height="1" fill="#fff"/><rect x="4" y="4" width="5" height="1" fill="#000"/><rect x="9" y="4" width="1" height="1" fill="#fff"/><rect x="10" y="4" width="3" height="1" fill="#000"/><rect x="1" y="5" width="13" height="1" fill="#000"/><rect x="0" y="6" width="2" height="1" fill="#000"/><rect x="2" y="6" width="1" height="1" fill="#fff"/><rect x="3" y="6" width="3" height="1" fill="#000"/><rect x="6" y="6" width="1" height="1" fill="#fff"/><rect x="7" y="6" width="2" height="1" fill="#000"/><rect x="9" y="6" width="1" height="1" fill="#fff"/><rect x="10" y="6" width="5" height="1" fill="#000"/><rect x="0" y="7" width="2" height="1" fill="#000"/><rect x="2" y="7" width="1" height="1" fill="#fff"/><rect x="3" y="7" width="3" height="1" fill="#000"/><rect x="6" y="7" width="1" height="1" fill="#fff"/><rect x="7" y="7" width="2" height="1" fill="#000"/><rect x="9" y="7" width="1" height="1" fill="#fff"/><rect x="10" y="7" width="5" height="1" fill="#000"/><rect x="0" y="8" width="2" height="1" fill="#000"/><rect x="2" y="8" width="1" height="1" fill="#fff"/><rect x="3" y="8" width="6" height="1" fill="#000"/><rect x="9" y="8" width="1" height="1" fill="#fff"/><rect x="10" y="8" width="5" height="1" fill="#000"/><rect x="0" y="9" width="6" height="1" fill="#000"/><rect x="7" y="9" width="1" height="1" fill="#000"/><rect x="9" y="9" width="6" height="1" fill="#000"/><rect x="0" y="10" width="1" height="1" fill="#000"/><rect x="1" y="10" width="1" height="1" fill="#fff"/><rect x="2" y="10" width="3" height="1" fill="#000"/><rect x="10" y="10" width="1" height="1" fill="#000"/><rect x="11" y="10" width="1" height="1" fill="#fff"/><rect x="12" y="10" width="3" height="1" fill="#000"/><rect x="0" y="11" width="1" height="1" fill="#000"/><rect x="1" y="11" width="1" height="1" fill="#fff"/><rect x="2" y="11" width="3" height="1" fill="#000"/><rect x="10" y="11" width="1" height="1" fill="#000"/><rect x="11" y="11" width="1" height="1" fill="#fff"/><rect x="12" y="11" width="3" height="1" fill="#000"/><rect x="0" y="12" width="5" height="1" fill="#000"/><rect x="10" y="12" width="5" height="1" fill="#000"/></svg>
<div class="t " style="left:21px;top:495px;font-size:11px;transform:scaleX(0.9606);transform-origin:0 0;">Find Customer</div>
<div class="bt" style="left:9px;top:518px;width:91px;height:37px;"></div>
<div style="left:46px;top:520px;width:16px;height:16px;background:#c0c0c0;"></div>
<svg style="left:48px;top:521px" width="11" height="13" shape-rendering="crispEdges"><rect x="0" y="0" width="8" height="1" fill="#000"/><rect x="0" y="1" width="1" height="1" fill="#000"/><rect x="1" y="1" width="6" height="1" fill="#fff"/><rect x="7" y="1" width="2" height="1" fill="#000"/><rect x="0" y="2" width="1" height="1" fill="#000"/><rect x="1" y="2" width="6" height="1" fill="#fff"/><rect x="7" y="2" width="1" height="1" fill="#000"/><rect x="8" y="2" width="1" height="1" fill="#fff"/><rect x="9" y="2" width="1" height="1" fill="#000"/><rect x="0" y="3" width="1" height="1" fill="#000"/><rect x="1" y="3" width="6" height="1" fill="#fff"/><rect x="7" y="3" width="4" height="1" fill="#000"/><rect x="0" y="4" width="1" height="1" fill="#000"/><rect x="1" y="4" width="9" height="1" fill="#fff"/><rect x="10" y="4" width="1" height="1" fill="#000"/><rect x="0" y="5" width="1" height="1" fill="#000"/><rect x="1" y="5" width="9" height="1" fill="#fff"/><rect x="10" y="5" width="1" height="1" fill="#000"/><rect x="0" y="6" width="1" height="1" fill="#000"/><rect x="1" y="6" width="9" height="1" fill="#fff"/><rect x="10" y="6" width="1" height="1" fill="#000"/><rect x="0" y="7" width="1" height="1" fill="#000"/><rect x="1" y="7" width="9" height="1" fill="#fff"/><rect x="10" y="7" width="1" height="1" fill="#000"/><rect x="0" y="8" width="1" height="1" fill="#000"/><rect x="1" y="8" width="9" height="1" fill="#fff"/><rect x="10" y="8" width="1" height="1" fill="#000"/><rect x="0" y="9" width="1" height="1" fill="#000"/><rect x="1" y="9" width="9" height="1" fill="#fff"/><rect x="10" y="9" width="1" height="1" fill="#000"/><rect x="0" y="10" width="1" height="1" fill="#000"/><rect x="1" y="10" width="9" height="1" fill="#fff"/><rect x="10" y="10" width="1" height="1" fill="#000"/><rect x="0" y="11" width="1" height="1" fill="#000"/><rect x="1" y="11" width="9" height="1" fill="#fff"/><rect x="10" y="11" width="1" height="1" fill="#000"/><rect x="0" y="12" width="11" height="1" fill="#000"/></svg>
<div class="t " style="left:18px;top:540px;font-size:11px;">New Customer</div>
<div class="t " style="left:24px;top:562px;font-size:11px;color:#6d6d6d;">Booking</div>
<div class="t " style="left:28px;top:576px;font-size:11px;color:#6d6d6d;">Status:</div>
<div class="t " style="left:17px;top:589px;font-size:16px;color:#6d6d6d;font-weight:700;">Enquiry</div>
<div style="left:18px;top:668px;width:68px;height:19px;background:#fff;"></div>
<div class="t " style="left:20px;top:672px;font-size:11px;color:#a0a0a0;">Confirm?</div>
<div class="sk" style="left:72px;top:671px;width:12px;height:12px;background:#f0f0f0;"></div>
<div class="grp" style="left:102px;top:475px;width:372px;height:212px;"></div>
<div class="t " style="left:109px;top:471px;font-size:12px;color:#0000cc;font-weight:700;background:#f0f0f0;padding:0 2px">Customer</div>
<div class="t " style="left:108px;top:491px;font-size:11px;transform:scaleX(0.9608);transform-origin:0 0;">Contact Name:</div>
<div class="t " style="left:109px;top:512px;font-size:11px;">Account Name:</div>
<div class="t " style="left:110px;top:533px;font-size:11px;">Account No:</div>
<div class="t " style="left:111px;top:554px;font-size:11px;">Address:</div>
<div class="sk" style="left:186px;top:485px;width:282px;height:21px;background:#e0e0e0;"></div>
<div class="cb" style="left:450px;top:487px;width:17px;height:18px"></div>
<svg style="left:454px;top:494px" width="8" height="5"><path d="M0 0H7.5L3.75 4Z" fill="#000"/></svg>
<div class="sk" style="left:186px;top:507px;width:283px;height:20px;background:#e0e0e0;"></div>
<div class="sk" style="left:186px;top:528px;width:106px;height:19px;background:#e0e0e0;"></div>
<div class="bt" style="left:294px;top:528px;width:22px;height:21px;"></div>
<svg style="left:297px;top:531px" width="16" height="12" shape-rendering="crispEdges"><rect x="5" y="1" width="1" height="1" fill="#000"/><rect x="4" y="2" width="1" height="1" fill="#000"/><rect x="6" y="2" width="1" height="1" fill="#000"/><rect x="14" y="2" width="1" height="1" fill="#000"/><rect x="3" y="3" width="1" height="1" fill="#000"/><rect x="6" y="3" width="1" height="1" fill="#000"/><rect x="13" y="3" width="1" height="1" fill="#000"/><rect x="15" y="3" width="1" height="1" fill="#000"/><rect x="2" y="4" width="1" height="1" fill="#000"/><rect x="6" y="4" width="1" height="1" fill="#000"/><rect x="12" y="4" width="1" height="1" fill="#000"/><rect x="15" y="4" width="1" height="1" fill="#000"/><rect x="1" y="5" width="1" height="1" fill="#000"/><rect x="11" y="5" width="1" height="1" fill="#000"/><rect x="15" y="5" width="1" height="1" fill="#000"/><rect x="0" y="6" width="12" height="1" fill="#000"/><rect x="0" y="7" width="1" height="1" fill="#000"/><rect x="1" y="7" width="1" height="1" fill="#00e8e8"/><rect x="2" y="7" width="1" height="1" fill="#c0ffff"/><rect x="3" y="7" width="1" height="1" fill="#00e8e8"/><rect x="4" y="7" width="1" height="1" fill="#000"/><rect x="7" y="7" width="1" height="1" fill="#000"/><rect x="8" y="7" width="1" height="1" fill="#00e8e8"/><rect x="9" y="7" width="1" height="1" fill="#c0ffff"/><rect x="10" y="7" width="1" height="1" fill="#00e8e8"/><rect x="11" y="7" width="1" height="1" fill="#000"/><rect x="0" y="8" width="1" height="1" fill="#000"/><rect x="1" y="8" width="2" height="1" fill="#00e8e8"/><rect x="3" y="8" width="1" height="1" fill="#c0ffff"/><rect x="4" y="8" width="1" height="1" fill="#000"/><rect x="7" y="8" width="1" height="1" fill="#000"/><rect x="8" y="8" width="2" height="1" fill="#00e8e8"/><rect x="10" y="8" width="1" height="1" fill="#c0ffff"/><rect x="11" y="8" width="1" height="1" fill="#000"/><rect x="0" y="9" width="1" height="1" fill="#000"/><rect x="1" y="9" width="1" height="1" fill="#c0ffff"/><rect x="2" y="9" width="2" height="1" fill="#00e8e8"/><rect x="4" y="9" width="1" height="1" fill="#000"/><rect x="7" y="9" width="1" height="1" fill="#000"/><rect x="8" y="9" width="1" height="1" fill="#c0ffff"/><rect x="9" y="9" width="2" height="1" fill="#00e8e8"/><rect x="11" y="9" width="1" height="1" fill="#000"/><rect x="0" y="10" width="1" height="1" fill="#000"/><rect x="1" y="10" width="3" height="1" fill="#00e8e8"/><rect x="4" y="10" width="1" height="1" fill="#000"/><rect x="7" y="10" width="1" height="1" fill="#000"/><rect x="8" y="10" width="3" height="1" fill="#00e8e8"/><rect x="11" y="10" width="1" height="1" fill="#000"/><rect x="1" y="11" width="3" height="1" fill="#000"/><rect x="8" y="11" width="3" height="1" fill="#000"/></svg>
<div class="sk" style="left:186px;top:549px;width:181px;height:60px;background:#e0e0e0;"></div>
<div class="t " style="left:369px;top:536px;font-size:11px;">Telephone:</div>
<div class="sk" style="left:369px;top:549px;width:100px;height:19px;background:#e0e0e0;"></div>
<div class="t " style="left:396px;top:585px;font-size:11px;">Zone:</div>
<div class="sk1" style="left:429px;top:582px;width:39px;height:16px;background:#f0f0f0;box-shadow:inset 1px 1px #696969"></div>
<div class="t " style="left:439px;top:586px;font-size:11px;">N/A</div>
<div class="t " style="left:111px;top:622px;font-size:11px;transform:scaleX(0.8933);transform-origin:0 0;">Email:</div>
<div class="sk" style="left:144px;top:617px;width:254px;height:21px;background:#e0e0e0;"></div>
<div class="t " style="left:107px;top:644px;font-size:11px;">Letter:</div>
<div class="sk" style="left:144px;top:639px;width:232px;height:20px;background:#fff;"></div>
<div class="bt" style="left:377px;top:639px;width:19px;height:19px;"></div>
<div class="t " style="left:382px;top:644px;font-size:11px;color:#500050;">...</div>
<div class="bt" style="left:402px;top:615px;width:68px;height:22px;"></div>
<div class="t dis" style="left:407px;top:621px;font-size:11px;transform:scaleX(0.9536);transform-origin:0 0;"><span class="u" style="position:static">E</span>-mail Conf</div>
<div class="bt" style="left:402px;top:639px;width:68px;height:22px;"></div>
<div class="t dis" style="left:407px;top:644px;font-size:11px;">Send Letter</div>
<div class="bt" style="left:400px;top:663px;width:70px;height:25px;"></div>
<div class="t dis" style="left:406px;top:670px;font-size:11px;transform:scaleX(0.9505);transform-origin:0 0;">Email Letter</div>
<div class="grp" style="left:477px;top:475px;width:309px;height:64px;"></div>
<div class="t " style="left:484px;top:471px;font-size:12px;color:#0000cc;font-weight:700;background:#f0f0f0;padding:0 2px">Payment</div>
<div class="t " style="left:485px;top:489px;font-size:11px;color:#6d6d6d;">Total Amount Due:</div>
<div class="t " style="left:485px;top:507px;font-size:11px;color:#6d6d6d;transform:scaleX(0.9519);transform-origin:0 0;">Paid So Far:</div>
<div class="t " style="left:485px;top:524px;font-size:11px;color:#6d6d6d;transform:scaleX(0.9660);transform-origin:0 0;">Balance Due:</div>
<div class="sk" style="left:585px;top:483px;width:69px;height:18px;background:#fff;"></div>
<div class="sk" style="left:585px;top:502px;width:69px;height:17px;background:#fff;"></div>
<div class="sk" style="left:585px;top:520px;width:69px;height:17px;background:#fff;"></div>
<div class="bt" style="left:678px;top:480px;width:98px;height:22px;"></div>
<div class="t " style="left:688px;top:486px;font-size:11px;transform:scaleX(0.9715);transform-origin:0 0;">Payment History</div>
<div class="bt" style="left:855px;top:479px;width:98px;height:22px;"></div>
<div class="t " style="left:872px;top:484px;font-size:11px;">Tour Leaders</div>
<div class="t " style="left:858px;top:508px;font-size:11px;">Language</div>
<div class="sk" style="left:858px;top:521px;width:129px;height:21px;background:#fff;"></div>
<div class="cb" style="left:969px;top:523px;width:17px;height:18px"></div>
<svg style="left:973px;top:530px" width="8" height="5"><path d="M0 0H7.5L3.75 4Z" fill="#000"/></svg>
<div class="t " style="left:861px;top:527px;font-size:11px;">--- Select Language --</div>
<div class="grp" style="left:477px;top:550px;width:510px;height:137px;"></div>
<div class="t " style="left:484px;top:545px;font-size:12px;color:#0000cc;font-weight:700;background:#f0f0f0;padding:0 2px">Notes</div>
<div class="sk" style="left:480px;top:558px;width:348px;height:40px;background:#fff;"></div>
<svg style="left:814px;top:564px" width="10" height="8"><path d="M1 6L5 2L9 6" fill="none" stroke="#c0c0c0" stroke-width="1.6"/></svg>
<svg style="left:814px;top:583px" width="10" height="8"><path d="M1 2L5 6L9 2" fill="none" stroke="#c0c0c0" stroke-width="1.6"/></svg>
<div class="bt" style="left:828px;top:558px;width:19px;height:19px;"></div>
<div class="t " style="left:832px;top:562px;font-size:12px;">ts</div>
<div class="bt" style="left:829px;top:579px;width:18px;height:19px;"></div>
<div class="t " style="left:834px;top:583px;font-size:11px;color:#500050;">...</div>
<div style="left:480px;top:599px;width:108px;height:1px;background:#696969;"></div>
<div class="t " style="left:483px;top:606px;font-size:11px;color:#6d6d6d;">Birthday</div>
<div class="t " style="left:483px;top:620px;font-size:11px;color:#6d6d6d;">Party?</div>
<div class="sk" style="left:522px;top:618px;width:13px;height:13px;background:#f0f0f0;"></div>
<div class="t " style="left:546px;top:606px;font-size:11px;color:#6d6d6d;transform:scaleX(0.9196);transform-origin:0 0;">Name:</div>
<div class="sk" style="left:581px;top:601px;width:265px;height:19px;background:#fff;"></div>
<div class="t " style="left:548px;top:627px;font-size:11px;color:#6d6d6d;transform:scaleX(0.9217);transform-origin:0 0;">DOB:</div>
<div class="sk" style="left:581px;top:622px;width:89px;height:16px;background:#f0f0f0;"></div>
<div class="cb" style="left:652px;top:624px;width:17px;height:13px"></div>
<svg style="left:656px;top:628px" width="8" height="5"><path d="M0 0H7.5L3.75 4Z" fill="#a0a0a0"/></svg>
<div class="t " style="left:681px;top:627px;font-size:11px;color:#6d6d6d;">Age:</div>
<div class="t " style="left:859px;top:555px;font-size:11px;color:#6d6d6d;">Arrival</div>
<div class="t " style="left:859px;top:569px;font-size:11px;color:#6d6d6d;transform:scaleX(0.9264);transform-origin:0 0;">Time:</div>
<div class="sk" style="left:897px;top:555px;width:51px;height:19px;background:#f0f0f0;"></div>
<div class="cb" style="left:930px;top:557px;width:17px;height:8px"></div>
<div class="cb" style="left:930px;top:565px;width:17px;height:8px"></div>
<svg style="left:937px;top:560px" width="3" height="2" shape-rendering="crispEdges"><rect x="1" y="0" width="1" height="1" fill="#a0a0a0"/><rect x="0" y="1" width="3" height="1" fill="#a0a0a0"/></svg>
<svg style="left:937px;top:568px" width="3" height="2" shape-rendering="crispEdges"><rect x="0" y="0" width="3" height="1" fill="#a0a0a0"/><rect x="1" y="1" width="1" height="1" fill="#a0a0a0"/></svg>
<div class="t " style="left:900px;top:562px;font-size:11px;color:#6d6d6d;">00:00</div>
<div class="bt" style="left:1px;top:696px;width:94px;height:25px;"></div>
<div class="t " style="left:7px;top:703px;font-size:11px;transform:scaleX(0.9691);transform-origin:0 0;">Internal <span class="u" style="position:static">M</span>essage</div>
<div class="bt" style="left:210px;top:696px;width:86px;height:25px;"></div>
<div class="t " style="left:216px;top:703px;font-size:11px;transform:scaleX(0.9642);transform-origin:0 0;"><span class="u" style="position:static">C</span>ancel Booking</div>
<div class="bt" style="left:305px;top:696px;width:80px;height:25px;"></div>
<div class="t dis" style="left:310px;top:703px;font-size:11px;transform:scaleX(0.9725);transform-origin:0 0;"><span class="u" style="position:static">M</span>ove Booking</div>
<div class="bt" style="left:409px;top:696px;width:74px;height:25px;"></div>
<div class="t dis" style="left:434px;top:703px;font-size:11px;transform:scaleX(1.1227);transform-origin:0 0;"><span class="u" style="position:static">P</span>rint</div>
<div class="bt" style="left:519px;top:696px;width:77px;height:25px;"></div>
<div class="t dis" style="left:525px;top:703px;font-size:11px;">Save <span class="u" style="position:static">E</span>nquiry</div>
<div class="bt" style="left:609px;top:696px;width:77px;height:25px;"></div>
<div class="t dis" style="left:613px;top:703px;font-size:11px;">Save <span class="u" style="position:static">B</span>ooking</div>
<div class="bt" style="left:763px;top:696px;width:73px;height:25px;"></div>
<div class="t dis" style="left:782px;top:703px;font-size:11px;"><span class="u" style="position:static">C</span>ancel</div>
<div class="bt" style="left:840px;top:696px;width:74px;height:25px;"></div>
<div class="t " style="left:863px;top:703px;font-size:11px;">C<span class="u" style="position:static">l</span>ose</div>
<div class="bt" style="left:921px;top:696px;width:74px;height:25px;"></div>
<div class="t " style="left:947px;top:703px;font-size:11px;"><span class="u" style="position:static">H</span>elp</div>
<div style="left:32px;top:49px;width:256px;height:152px;background:#f0f0f0;border:1px solid #a0a0a0;box-shadow:2px 2px 2px rgba(0,0,0,0.25)"></div>
<div style="left:35px;top:154px;width:250px;height:22px;background:#91c9f7;"></div>
<div style="left:63px;top:122px;width:222px;height:1px;background:#d0d0d0;"></div>
<div style="left:63px;top:150px;width:222px;height:1px;background:#d0d0d0;"></div>
<div class="t " style="left:67px;top:57px;font-size:12px;">Cut</div>
<div class="t" style="left:180px;width:87px;text-align:right;top:57px;font-size:12px">Ctrl+X</div>
<div class="t " style="left:67px;top:79px;font-size:12px;">Copy</div>
<div class="t" style="left:180px;width:87px;text-align:right;top:79px;font-size:12px">Ctrl+C</div>
<div class="t " style="left:67px;top:101px;font-size:12px;">Paste</div>
<div class="t" style="left:180px;width:87px;text-align:right;top:101px;font-size:12px">Ctrl+V</div>
<div class="t " style="left:67px;top:130px;font-size:12px;">Find Booking</div>
<div class="t" style="left:180px;width:87px;text-align:right;top:130px;font-size:12px">F3</div>
<div class="t " style="left:67px;top:159px;font-size:12px;">Edit Mailmerge Template</div>
<div class="t " style="left:67px;top:181px;font-size:12px;">Booking Letter Rules</div>
</body></html>
